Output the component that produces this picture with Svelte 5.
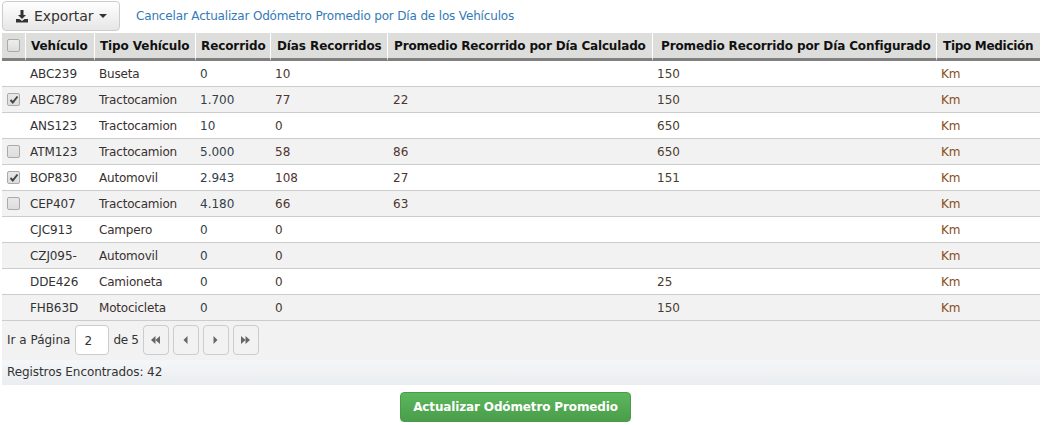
<script>
	const rows = [
		{ placa: 'ABC239', tipo: 'Buseta', recorrido: '0', dias: '10', calculado: '', configurado: '150', check: null },
		{ placa: 'ABC789', tipo: 'Tractocamion', recorrido: '1.700', dias: '77', calculado: '22', configurado: '150', check: true },
		{ placa: 'ANS123', tipo: 'Tractocamion', recorrido: '10', dias: '0', calculado: '', configurado: '650', check: null },
		{ placa: 'ATM123', tipo: 'Tractocamion', recorrido: '5.000', dias: '58', calculado: '86', configurado: '650', check: false },
		{ placa: 'BOP830', tipo: 'Automovil', recorrido: '2.943', dias: '108', calculado: '27', configurado: '151', check: true },
		{ placa: 'CEP407', tipo: 'Tractocamion', recorrido: '4.180', dias: '66', calculado: '63', configurado: '', check: false },
		{ placa: 'CJC913', tipo: 'Campero', recorrido: '0', dias: '0', calculado: '', configurado: '', check: null },
		{ placa: 'CZJ095-', tipo: 'Automovil', recorrido: '0', dias: '0', calculado: '', configurado: '', check: null },
		{ placa: 'DDE426', tipo: 'Camioneta', recorrido: '0', dias: '0', calculado: '', configurado: '25', check: null },
		{ placa: 'FHB63D', tipo: 'Motocicleta', recorrido: '0', dias: '0', calculado: '', configurado: '150', check: null }
	];
</script>

<div class="page">
	<div class="toolbar">
		<button class="export">
			<svg class="download" width="12" height="13" viewBox="0 0 12 13">
				<path d="M4.500 0h3v5H10L6 9 2 5h2.500z M0 9h3.500L6 11l2.500-2H12v3.500H0z" fill="#333" />
			</svg>
			Exportar
			<span class="caret"></span>
		</button>
		<span class="cancel">Cancelar Actualizar Odómetro Promedio por Día de los Vehículos</span>
	</div>

	<table>
		<colgroup>
			<col class="w-check" />
			<col class="w-placa" />
			<col class="w-tipo" />
			<col class="w-rec" />
			<col class="w-dias" />
			<col class="w-calc" />
			<col class="w-conf" />
			<col class="w-med" />
		</colgroup>
		<thead>
			<tr>
				<th class="h-check"><span class="box"></span></th>
				<th>Vehículo</th>
				<th>Tipo Vehículo</th>
				<th>Recorrido</th>
				<th class="h-dias">Días Recorridos</th>
				<th class="h-calc">Promedio Recorrido por Día Calculado</th>
				<th class="h-conf">Promedio Recorrido por Día Configurado</th>
				<th class="h-med">Tipo Medición</th>
			</tr>
		</thead>
		<tbody>
			{#each rows as row}
				<tr>
					<td class="check">
						{#if row.check !== null}
							<span class="box small">
								{#if row.check}
									<svg width="10" height="10" viewBox="0 0 10 10"><path d="M1.500 5l2.300 2.500L8.500 1.500" fill="none" stroke="#444" stroke-width="2" /></svg>
								{/if}
							</span>
						{/if}
					</td>
					<td class="placa">{row.placa}</td>
					<td class="tipo">{row.tipo}</td>
					<td class="rec">{row.recorrido}</td>
					<td class="dias">{row.dias}</td>
					<td class="calc">{row.calculado}</td>
					<td class="conf">{row.configurado}</td>
					<td class="med">Km</td>
				</tr>
			{/each}
		</tbody>
	</table>

	<div class="pager">
		<span>Ir a Página</span>
		<span class="page-input">2</span>
		<span class="total">de 5</span>
		<div class="pager-buttons">
			<button class="nav" aria-label="Primera">
				<svg width="9" height="8" viewBox="0 0 9 8"><path d="M4.500 0v8L0 4zM9 0v8L4.500 4z" fill="#666" /></svg>
			</button>
			<button class="nav" aria-label="Anterior">
				<svg width="5" height="8" viewBox="0 0 5 8"><path d="M4.500 0v8L.5 4z" fill="#666" /></svg>
			</button>
			<button class="nav" aria-label="Siguiente">
				<svg width="5" height="8" viewBox="0 0 5 8"><path d="M.5 0v8l4-4z" fill="#666" /></svg>
			</button>
			<button class="nav" aria-label="Última">
				<svg width="9" height="8" viewBox="0 0 9 8"><path d="M0 0v8l4.500-4zM4.500 0v8L9 4z" fill="#666" /></svg>
			</button>
		</div>
	</div>
	<div class="found">Registros Encontrados: 42</div>

	<div class="actions">
		<button class="update">Actualizar Odómetro Promedio</button>
	</div>
</div>

<style>
	:global(body) {
		margin: 0;
		background: #fff;
	}
	.page {
		width: 1042px;
		height: 425px;
		padding: 0 2px;
		box-sizing: border-box;
		font-family: "DejaVu Sans", Verdana, sans-serif;
		font-size: 12px;
		color: #333;
		overflow: hidden;
	}
	.toolbar {
		display: flex;
		align-items: flex-start;
		height: 33px;
	}
	.export {
		display: flex;
		align-items: center;
		gap: 6px;
		width: 118px;
		height: 30px;
		margin-top: 1px;
		padding: 0 0 0 13px;
		border: 1px solid #ccc;
		border-radius: 4px;
		background: linear-gradient(#fff, #e6e6e6);
		font: inherit;
		font-size: 14px;
		letter-spacing: -0.1px;
		color: #333;
		box-sizing: border-box;
	}
	.caret {
		width: 0;
		height: 0;
		border-top: 4px solid #333;
		border-left: 4px solid transparent;
		border-right: 4px solid transparent;
	}
	.cancel {
		margin-left: 16px;
		margin-top: 9px;
		color: #337ab7;
		letter-spacing: -0.16px;
	}
	table {
		width: 1038px;
		border-collapse: separate;
		border-spacing: 0;
		table-layout: fixed;
	}
	.w-check { width: 23px; }
	.w-placa { width: 69px; }
	.w-tipo { width: 101px; }
	.w-rec { width: 75px; }
	.w-dias { width: 117px; }
	.w-calc { width: 265px; }
	.w-conf { width: 284px; }
	.w-med { width: 104px; }
	th {
		height: 25px;
		padding: 0 0 0 5px;
		background: #dddedc;
		border-bottom: 3px solid #808080;
		border-left: 1px solid #fff;
		text-align: left;
		font-weight: bold;
		color: #111;
		letter-spacing: -0.1px;
		white-space: nowrap;
		overflow: hidden;
	}
	th.h-check {
		border-left: 0;
		padding-left: 5px;
	}
	th.h-dias {
		padding-left: 6px;
	}
	th.h-calc,
	th.h-med {
		padding-left: 6px;
		letter-spacing: -0.16px;
	}
	th.h-med {
		letter-spacing: -0.3px;
	}
	th.h-conf {
		padding-left: 8px;
		letter-spacing: -0.13px;
	}
	td {
		height: 25px;
		padding: 0 0 0 5px;
		border-bottom: 1px solid #ccc;
		white-space: nowrap;
	}
	tbody tr:nth-child(even) td {
		background: #f2f2f2;
	}
	.placa { color: #333; letter-spacing: -0.1px; }
	.tipo { color: #3a3030; letter-spacing: -0.2px; }
	.rec { color: #333f4a; }
	.dias { color: #4d3530; }
	.calc { color: #4d3530; padding-left: 6px; }
	.conf { color: #4a3d30; padding-left: 5px; }
	.med { color: #8a4d20; }
	.box {
		display: flex;
		align-items: center;
		justify-content: center;
		width: 11px;
		height: 11px;
		border: 1px solid #aaa;
		border-radius: 2px;
		background: linear-gradient(#eee, #ddd);
	}
	.box.small {
		background: linear-gradient(#e8e8e8, #ddd);
	}
	.pager {
		display: flex;
		align-items: center;
		gap: 4px;
		height: 39px;
		box-sizing: border-box;
		padding: 0 0 2px 5px;
		background: #f2f2f2;
	}
	.page-input {
		width: 34px;
		height: 30px;
		box-sizing: border-box;
		margin: 0 1px;
		padding: 8px 0 0 8px;
		border: 1px solid #ccc;
		border-radius: 4px;
		background: #fff;
	}
	.total {
		letter-spacing: -0.3px;
		margin-left: -1px;
	}
	.pager-buttons {
		display: flex;
		gap: 4px;
	}
	.nav {
		display: flex;
		align-items: center;
		justify-content: center;
		width: 26px;
		height: 30px;
		padding: 0;
		border: 1px solid #ccc;
		border-radius: 4px;
		background: #f2f2f2;
	}
	.found {
		height: 25px;
		line-height: 25px;
		padding-left: 5px;
		letter-spacing: -0.08px;
		background: linear-gradient(#f5f6f7, #eaedf1);
	}
	.actions {
		display: flex;
		justify-content: center;
		padding-top: 7px;
	}
	.update {
		width: 231px;
		height: 30px;
		margin-left: -11px;
		padding: 0;
		border: 1px solid #4b9b4b;
		border-radius: 4px;
		background: linear-gradient(#5cb85c, #4a9d4a);
		color: #fff;
		font: inherit;
		font-weight: bold;
		letter-spacing: -0.14px;
	}
</style>
